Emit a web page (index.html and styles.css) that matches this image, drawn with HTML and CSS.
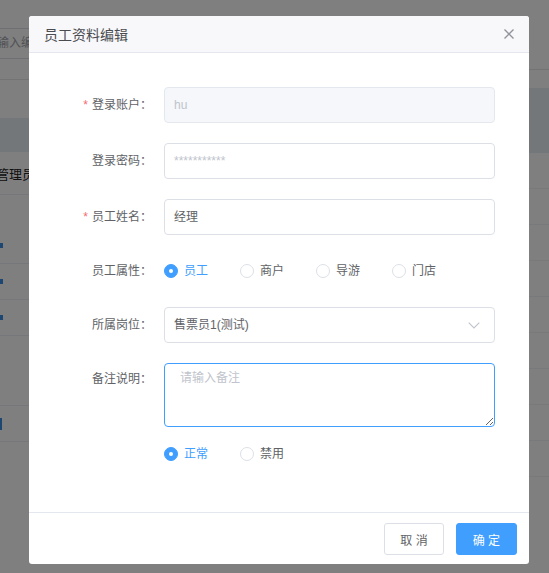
FILE: index.html
```html
<!DOCTYPE html>
<html lang="zh-CN">
<head>
<meta charset="utf-8">
<title>员工资料编辑</title>
<link rel="stylesheet" href="styles.css">
</head>
<body>
<div class="page">
  <div class="left">
    <div class="toolbar">
      <div class="search">请输入编号</div>
    </div>
    <div class="table">
      <div class="thead"></div>
      <div class="row first"><span class="cell">管理员</span></div>
      <div class="row gap"></div>
      <div class="row short"><span class="link"></span></div>
      <div class="row short"><span class="link"></span></div>
      <div class="row short"><span class="link"></span></div>
      <div class="row spacer"></div>
      <div class="row short"><span class="link tall"></span></div>
    </div>
  </div>
  <div class="right">
    <div class="r-top"></div>
    <div class="r-band"></div>
    <div class="r-row"></div>
    <div class="r-row"></div>
    <div class="r-row"></div>
    <div class="r-row"></div>
    <div class="r-row"></div>
    <div class="r-row"></div>
    <div class="r-row"></div>
    <div class="r-row"></div>
    <div class="r-row"></div>
  </div>
</div>
<div class="mask"></div>
<div class="dialog">
  <div class="dlg-header">
    <span class="dlg-title">员工资料编辑</span>
    <svg class="dlg-close" width="12" height="12" viewBox="0 0 12 12"><path d="M1.5 1.5 L10.5 10.5 M10.5 1.5 L1.5 10.5" stroke="#909399" stroke-width="1.4" fill="none"/></svg>
  </div>
  <div class="dlg-body">
    <div class="item">
      <label class="label req">登录账户：</label>
      <div class="ctrl"><div class="input disabled">hu</div></div>
    </div>
    <div class="item">
      <label class="label">登录密码：</label>
      <div class="ctrl"><div class="input placeholder">***********</div></div>
    </div>
    <div class="item">
      <label class="label req">员工姓名：</label>
      <div class="ctrl"><div class="input">经理</div></div>
    </div>
    <div class="item radio-item">
      <label class="label">员工属性：</label>
      <div class="ctrl radios">
        <span class="radio checked"><span class="dot"></span><span class="rtext">员工</span></span>
        <span class="radio"><span class="dot"></span><span class="rtext">商户</span></span>
        <span class="radio"><span class="dot"></span><span class="rtext">导游</span></span>
        <span class="radio"><span class="dot"></span><span class="rtext">门店</span></span>
      </div>
    </div>
    <div class="item">
      <label class="label">所属岗位：</label>
      <div class="ctrl"><div class="input select"><span>售票员1(测试)</span>
        <svg class="arrow" width="12" height="7" viewBox="0 0 12 7"><path d="M0.7 0.7 L6 6 L11.3 0.7" stroke="#c0c4cc" stroke-width="1.1" fill="none"/></svg>
      </div></div>
    </div>
    <div class="item ta-item">
      <label class="label">备注说明：</label>
      <div class="ctrl"><textarea class="textarea" placeholder="请输入备注"></textarea></div>
    </div>
    <div class="item last">
      <div class="label"></div>
      <div class="ctrl radios">
        <span class="radio checked"><span class="dot"></span><span class="rtext">正常</span></span>
        <span class="radio"><span class="dot"></span><span class="rtext">禁用</span></span>
      </div>
    </div>
  </div>
  <div class="dlg-footer">
    <button class="btn">取 消</button>
    <button class="btn primary">确 定</button>
  </div>
</div>
</body>
</html>
```

FILE: styles.css
```css
html, body {
  margin: 0;
  padding: 0;
  background: #ffffff;
  font-family: "Liberation Sans", "Noto Sans CJK SC", sans-serif;
  width: 549px;
  height: 573px;
  overflow: hidden;
}

.page {
  width: 549px;
  display: flex;
}

.left {
  width: 300px;
  flex: none;
}

.right {
  flex: 1;
}

.toolbar {
  height: 80px;
  border-bottom: 1px solid #e6e6e6;
  box-sizing: border-box;
  padding-top: 28px;
}

.search {
  width: 180px;
  height: 31px;
  box-sizing: border-box;
  margin-left: -28px;
  border: 1px solid #dcdfe6;
  border-left: none;
  padding-left: 13px;
  font-size: 12px;
  line-height: 29px;
  color: #a0a3a8;
}

.table {
  padding-top: 38px;
}

.thead {
  height: 34px;
  background: #e8eef4;
}

.row {
  height: 36px;
  border-bottom: 1px solid #ebeef5;
  display: flex;
  align-items: center;
  box-sizing: border-box;
}

.row.first {
  height: 43px;
}

.row.gap {
  height: 33px;
  border-bottom: none;
}

.row.spacer {
  height: 70px;
}

.row .cell {
  margin-left: -4px;
  font-size: 13px;
  color: #222;
}

.link {
  width: 3px;
  height: 5px;
  background: #3b8ee0;
}

.link.tall {
  height: 12px;
  width: 2px;
}

.r-top {
  height: 70px;
  border-bottom: 1px solid #e6e6e6;
  box-sizing: border-box;
}

.r-band {
  margin-top: 18px;
  height: 65px;
  background: #e8eef4;
}

.r-row {
  height: 36px;
  border-bottom: 1px solid #f0f2f6;
  box-sizing: border-box;
}

.mask {
  position: fixed;
  inset: 0;
  background: rgba(0, 0, 0, 0.5);
}

.dialog {
  position: absolute;
  top: 16px;
  left: 29px;
  width: 500px;
  background: #ffffff;
  border-radius: 3px;
  overflow: hidden;
}

.dlg-header {
  height: 36px;
  border-bottom: 1px solid #e4e7ed;
  background: #f8f8fa;
  display: flex;
  align-items: center;
  justify-content: space-between;
  padding: 0 15px 0 15px;
}

.dlg-title {
  font-size: 14px;
  color: #4a4c50;
}

.dlg-close {
  display: block;
  margin-right: -1px;
}

.dlg-body {
  padding: 34px 34px 51px 35px;
}

.item {
  display: flex;
  margin-bottom: 20px;
}

.item.last {
  margin-bottom: 0;
}

.label {
  width: 100px;
  flex: none;
  box-sizing: border-box;
  padding-right: 12px;
  text-align: right;
  font-size: 12px;
  line-height: 36px;
  color: #606266;
}

.label.req::before {
  content: "*";
  color: #f56c6c;
  margin-right: 4px;
}

.ctrl {
  flex: 1;
}

.input {
  height: 36px;
  box-sizing: border-box;
  border: 1px solid #dcdfe6;
  border-radius: 4px;
  padding: 0 9px;
  font-size: 12px;
  line-height: 34px;
  color: #606266;
  background: #fff;
}

.input.disabled {
  background: #f5f7fa;
  border-color: #e4e7ed;
  color: #c0c4cc;
}

.input.placeholder {
  color: #c0c4cc;
}

.input.select {
  display: flex;
  align-items: center;
  justify-content: space-between;
  padding-right: 14px;
}

.arrow {
  display: block;
}

.radio-item .label {
  line-height: 32px;
}

.radios {
  display: flex;
  align-items: center;
  height: 32px;
}

.item.last .radios {
  height: 14px;
}

.item.last .label {
  line-height: 14px;
}

.radio {
  display: flex;
  align-items: center;
  margin-right: 32px;
  font-size: 12px;
  color: #606266;
}

.radio .dot {
  width: 14px;
  height: 14px;
  box-sizing: border-box;
  border: 1px solid #dcdfe6;
  border-radius: 50%;
  background: #fff;
  position: relative;
}

.radio.checked .dot {
  border-color: #409eff;
  background: #409eff;
}

.radio.checked .dot::after {
  content: "";
  position: absolute;
  width: 4px;
  height: 4px;
  border-radius: 50%;
  background: #fff;
  left: 50%;
  top: 50%;
  transform: translate(-50%, -50%);
}

.rtext {
  padding-left: 6px;
  line-height: 14px;
}

.radio.checked .rtext {
  color: #409eff;
}

.ta-item .label {
  line-height: 32px;
}

.textarea {
  display: block;
  width: 100%;
  height: 64px;
  box-sizing: border-box;
  border: 1px solid #409eff;
  border-radius: 4px;
  padding: 5px 15px;
  font-family: "Liberation Sans", "Noto Sans CJK SC", sans-serif;
  font-size: 12px;
  line-height: 18px;
  color: #606266;
  outline: none;
  resize: vertical;
}

.textarea::placeholder {
  color: #c0c4cc;
}

.dlg-footer {
  border-top: 1px solid #e4e7ed;
  padding: 10px 12px 9px 12px;
  display: flex;
  justify-content: flex-end;
  gap: 12px;
}

.btn {
  height: 32px;
  box-sizing: border-box;
  padding: 0 15px;
  border: 1px solid #dcdfe6;
  border-radius: 3px;
  background: #fff;
  font-family: "Liberation Sans", "Noto Sans CJK SC", sans-serif;
  font-size: 12px;
  color: #606266;
  white-space: pre;
}

.btn.primary {
  background: #409eff;
  border-color: #409eff;
  color: #fff;
  padding: 0 16px;
}
```
